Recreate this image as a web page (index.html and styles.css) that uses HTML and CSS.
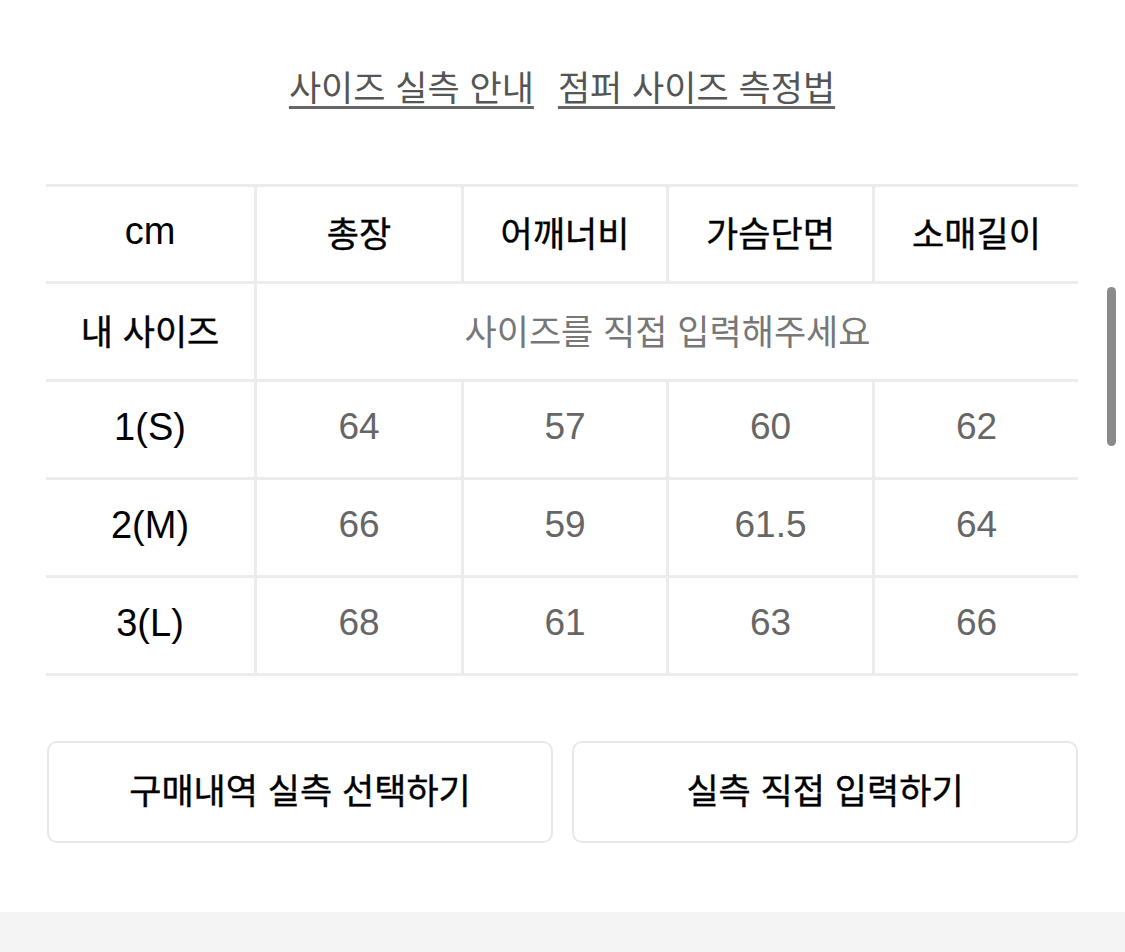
FILE: index.html
```html
<!DOCTYPE html>
<html lang="ko">
<head>
<meta charset="utf-8">
<title>사이즈 실측</title>
<link rel="stylesheet" href="styles.css">
</head>
<body>
<main class="page">
  <nav class="guide-links">
    <a class="guide-link" href="#">사이즈 실측 안내</a>
    <a class="guide-link" href="#">점퍼 사이즈 측정법</a>
  </nav>

  <section class="size-table">
    <div class="cell head latin">cm</div>
    <div class="cell head">총장</div>
    <div class="cell head">어깨너비</div>
    <div class="cell head">가슴단면</div>
    <div class="cell head">소매길이</div>

    <div class="cell head">내 사이즈</div>
    <div class="cell placeholder span4">사이즈를 직접 입력해주세요</div>

    <div class="cell head latin">1(S)</div>
    <div class="cell value">64</div>
    <div class="cell value">57</div>
    <div class="cell value">60</div>
    <div class="cell value">62</div>

    <div class="cell head latin">2(M)</div>
    <div class="cell value">66</div>
    <div class="cell value">59</div>
    <div class="cell value">61.5</div>
    <div class="cell value">64</div>

    <div class="cell head latin">3(L)</div>
    <div class="cell value">68</div>
    <div class="cell value">61</div>
    <div class="cell value">63</div>
    <div class="cell value">66</div>
  </section>

  <div class="actions">
    <button class="action-btn" type="button">구매내역 실측 선택하기</button>
    <button class="action-btn" type="button">실측 직접 입력하기</button>
  </div>
</main>
<footer class="bottom-band"></footer>
<div class="scroll-thumb"></div>
</body>
</html>
```

FILE: styles.css
```css
* { box-sizing: border-box; }

html, body {
  margin: 0;
  padding: 0;
  background: #ffffff;
}

body {
  font-family: "Liberation Sans", "Noto Sans CJK KR", sans-serif;
  color: #111;
  width: 1125px;
  height: 952px;
  overflow: hidden;
  position: relative;
}

.page {
  padding: 64px 47px 0 46px;
}

.guide-links {
  display: flex;
  justify-content: center;
  gap: 24px;
  height: 44px;
}

.guide-link {
  font-family: "Noto Sans CJK KR", sans-serif;
  font-size: 35px;
  line-height: 44px;
  color: #555;
  text-decoration: underline;
  text-decoration-color: #666;
  text-decoration-thickness: 3px;
  text-underline-offset: 5px;
}

.size-table {
  margin-top: 76px;
  display: grid;
  grid-template-columns: 208px 204px 202px 203px 203px;
  grid-template-rows: 94px 95px 95px 95px 95px;
  gap: 3px;
  padding: 3px 0;
  background: #ececec;
  width: 1032px;
}

.cell {
  background: #fff;
  display: flex;
  align-items: center;
  justify-content: center;
  padding-bottom: 5px;
  font-family: "Noto Sans CJK KR", sans-serif;
}

.head {
  font-size: 35px;
  font-weight: 400;
  color: #000;
  -webkit-text-stroke: 0.4px #000;
}

.head.latin {
  font-family: "Liberation Sans", "Noto Sans CJK KR", sans-serif;
  font-size: 38px;
  font-weight: 400;
  color: #000;
  -webkit-text-stroke: 0;
}

.value {
  font-family: "Liberation Sans", sans-serif;
  font-size: 37px;
  color: #666;
}

.placeholder {
  font-size: 35px;
  color: #777;
}

.span4 {
  grid-column: span 4;
}

.actions {
  margin-top: 65px;
  display: grid;
  grid-template-columns: 506px 506px;
  gap: 19px;
  padding-left: 1px;
}

.action-btn {
  height: 102px;
  background: #fff;
  border: 2px solid #e8e8e8;
  border-radius: 10px;
  font-family: "Noto Sans CJK KR", sans-serif;
  font-size: 35px;
  font-weight: 400;
  color: #000;
  -webkit-text-stroke: 0.4px #000;
  padding: 0 0 8px 0;
}

.bottom-band {
  position: absolute;
  left: 0;
  right: 0;
  top: 912px;
  height: 40px;
  background: #f4f4f4;
}

.scroll-thumb {
  position: absolute;
  left: 1107px;
  top: 287px;
  width: 9px;
  height: 159px;
  border-radius: 5px;
  background: #8a8a8a;
}
```
